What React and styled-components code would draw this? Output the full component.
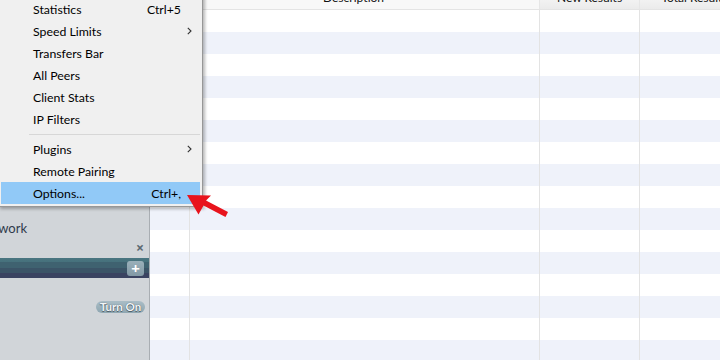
import React from 'react';
import styled, { createGlobalStyle } from 'styled-components';

const GlobalStyle = createGlobalStyle`
  html, body {
    margin: 0;
    padding: 0;
    overflow: hidden;
  }
  body {
    font-family: Lato, "Noto Sans", "Liberation Sans", sans-serif;
  }
`;

const Window = styled.div`
  position: relative;
  display: flex;
  width: 720px;
  height: 360px;
  overflow: hidden;
  background: #ffffff;
`;

/* ---------- sidebar ---------- */

const Sidebar = styled.div`
  flex: 0 0 149px;
  display: flex;
  flex-direction: column;
  background: #d1d5d9;
  border-right: 1px solid #a9aeb3;
`;

const SectionTitle = styled.div`
  margin: 218px 0 0 -23px;
  height: 20px;
  line-height: 20px;
  font-size: 13px;
  color: #2f3b4b;
  white-space: nowrap;
`;

const CloseRow = styled.div`
  height: 18px;
  display: flex;
  align-items: center;
  justify-content: flex-end;
  padding-right: 5px;
  font-family: "Noto Sans", sans-serif;
  font-size: 14px;
  font-weight: bold;
  color: #5d6973;
`;

const Band = styled.div`
  margin-top: 2px;
  height: 20px;
  display: flex;
  align-items: center;
  justify-content: flex-end;
  padding-right: 5px;
  background: linear-gradient(
    to bottom,
    #4a7681 0,
    #46717c 4px,
    #3f6270 4px,
    #3f6270 10px,
    #3b5467 10px,
    #3b5467 15px,
    #3a4361 15px,
    #3a4361 20px
  );
`;

const AddButton = styled.div`
  width: 17px;
  height: 15px;
  border-radius: 3px;
  background: linear-gradient(to bottom, #9ab0ba, #8299a5);
  display: flex;
  align-items: center;
  justify-content: center;
  color: #ffffff;
  font-family: "Noto Sans", sans-serif;
  font-size: 15px;
  font-weight: bold;
  line-height: 15px;
`;

const ToggleRow = styled.div`
  margin-top: 23px;
  display: flex;
  justify-content: flex-end;
  padding-right: 4px;
`;

const PillButton = styled.div`
  width: 49px;
  height: 12px;
  border-radius: 6px;
  background: linear-gradient(to bottom, #aabdc6, #8ea6b1);
  color: #f3f6f8;
  font-size: 11.5px;
  font-weight: bold;
  line-height: 12px;
  text-align: center;
  text-shadow: 0 0 1px #3e4e57, 0 1px 0 #56666f;
`;

/* ---------- table ---------- */

const Table = styled.div`
  flex: 1;
  display: flex;
  flex-direction: column;
  overflow: hidden;
`;

const GRID = '40px 350px 100px 110px';

const HeaderRow = styled.div`
  display: grid;
  grid-template-columns: ${GRID};
  height: 9px;
  border-bottom: 1px solid #e4e4e4;
  flex: 0 0 auto;
`;

const HeaderCell = styled.div`
  overflow: hidden;
  background: ${(p) => (p.$sorted ? 'linear-gradient(to bottom, #f2f2f2, #ebebeb)' : '#f8f8f8')};
  border-right: 1px solid #e6e6e6;
  text-align: center;
  padding-right: ${(p) => p.$shift || 0}px;
  font-size: 12px;
  line-height: 12px;
  color: #111;
  white-space: nowrap;

  span {
    display: block;
    margin-top: -8px;
  }
`;

const Row = styled.div`
  display: grid;
  grid-template-columns: ${GRID};
  height: 22px;
  flex: 0 0 auto;
  background: ${(p) => (p.$alt ? '#eff2fa' : '#ffffff')};
`;

const Cell = styled.div`
  border-right: 1px solid #e3e3e3;
`;

/* ---------- context menu ---------- */

const Menu = styled.div`
  position: absolute;
  top: -5px;
  left: -2px;
  width: 199px;
  padding: 2px;
  background: #f0f0f0;
  border: 1px solid #979797;
  box-shadow: 2px 2px 3px rgba(0, 0, 0, 0.28);
  font-size: 12.3px;
  color: #000;
`;

const Item = styled.div`
  position: relative;
  height: 22px;
  display: flex;
  align-items: center;
  padding: 0 19px 0 32px;
  background: ${(p) => (p.$active ? '#91c9f7' : 'transparent')};
  white-space: nowrap;
`;

const ItemLabel = styled.span`
  flex: 1;
`;

const Shortcut = styled.span``;

const SubArrow = styled.svg`
  position: absolute;
  right: 8px;
  top: 7px;
`;

const Separator = styled.div`
  height: 1px;
  margin: 4px 0 3px 28px;
  background: #d7d7d7;
`;

const Pointer = styled.svg`
  position: absolute;
  left: 180px;
  top: 186px;
`;

const menuItems = [
  { label: 'Statistics', shortcut: 'Ctrl+5' },
  { label: 'Speed Limits', sub: true },
  { label: 'Transfers Bar' },
  { label: 'All Peers' },
  { label: 'Client Stats' },
  { label: 'IP Filters' },
  { separator: true },
  { label: 'Plugins', sub: true },
  { label: 'Remote Pairing' },
  { label: 'Options...', shortcut: 'Ctrl+,', active: true },
];

const App = () => {
  const rows = Array.from({ length: 16 }, (_, i) => i);
  return (
    <Window>
      <GlobalStyle />
      <Sidebar>
        <SectionTitle>Network</SectionTitle>
        <CloseRow>×</CloseRow>
        <Band>
          <AddButton>+</AddButton>
        </Band>
        <ToggleRow>
          <PillButton>Turn On</PillButton>
        </ToggleRow>
      </Sidebar>

      <Table>
        <HeaderRow>
          <HeaderCell />
          <HeaderCell $shift={22}>
            <span>Description</span>
          </HeaderCell>
          <HeaderCell $sorted>
            <span>New Results</span>
          </HeaderCell>
          <HeaderCell $sorted>
            <span>Total Results</span>
          </HeaderCell>
        </HeaderRow>
        {rows.map((i) => (
          <Row key={i} $alt={i % 2 === 1}>
            <Cell />
            <Cell />
            <Cell />
            <Cell />
          </Row>
        ))}
      </Table>

      <Menu>
        {menuItems.map((item, i) =>
          item.separator ? (
            <Separator key={i} />
          ) : (
            <Item key={i} $active={item.active}>
              <ItemLabel>{item.label}</ItemLabel>
              {item.shortcut && <Shortcut>{item.shortcut}</Shortcut>}
              {item.sub && (
                <SubArrow width="5" height="8" viewBox="0 0 5 8">
                  <path d="M0.8 0.8 L4 4 L0.8 7.2" fill="none" stroke="#333" strokeWidth="1.1" />
                </SubArrow>
              )}
            </Item>
          )
        )}
      </Menu>

      <Pointer width="56" height="36" viewBox="0 0 56 36">
        <polygon
          points="7,9 31,9.5 26,14.5 48,26 45.5,31 23.5,19.5 18.5,28.5"
          fill="#e8141c"
        />
      </Pointer>
    </Window>
  );
};

export default App;
